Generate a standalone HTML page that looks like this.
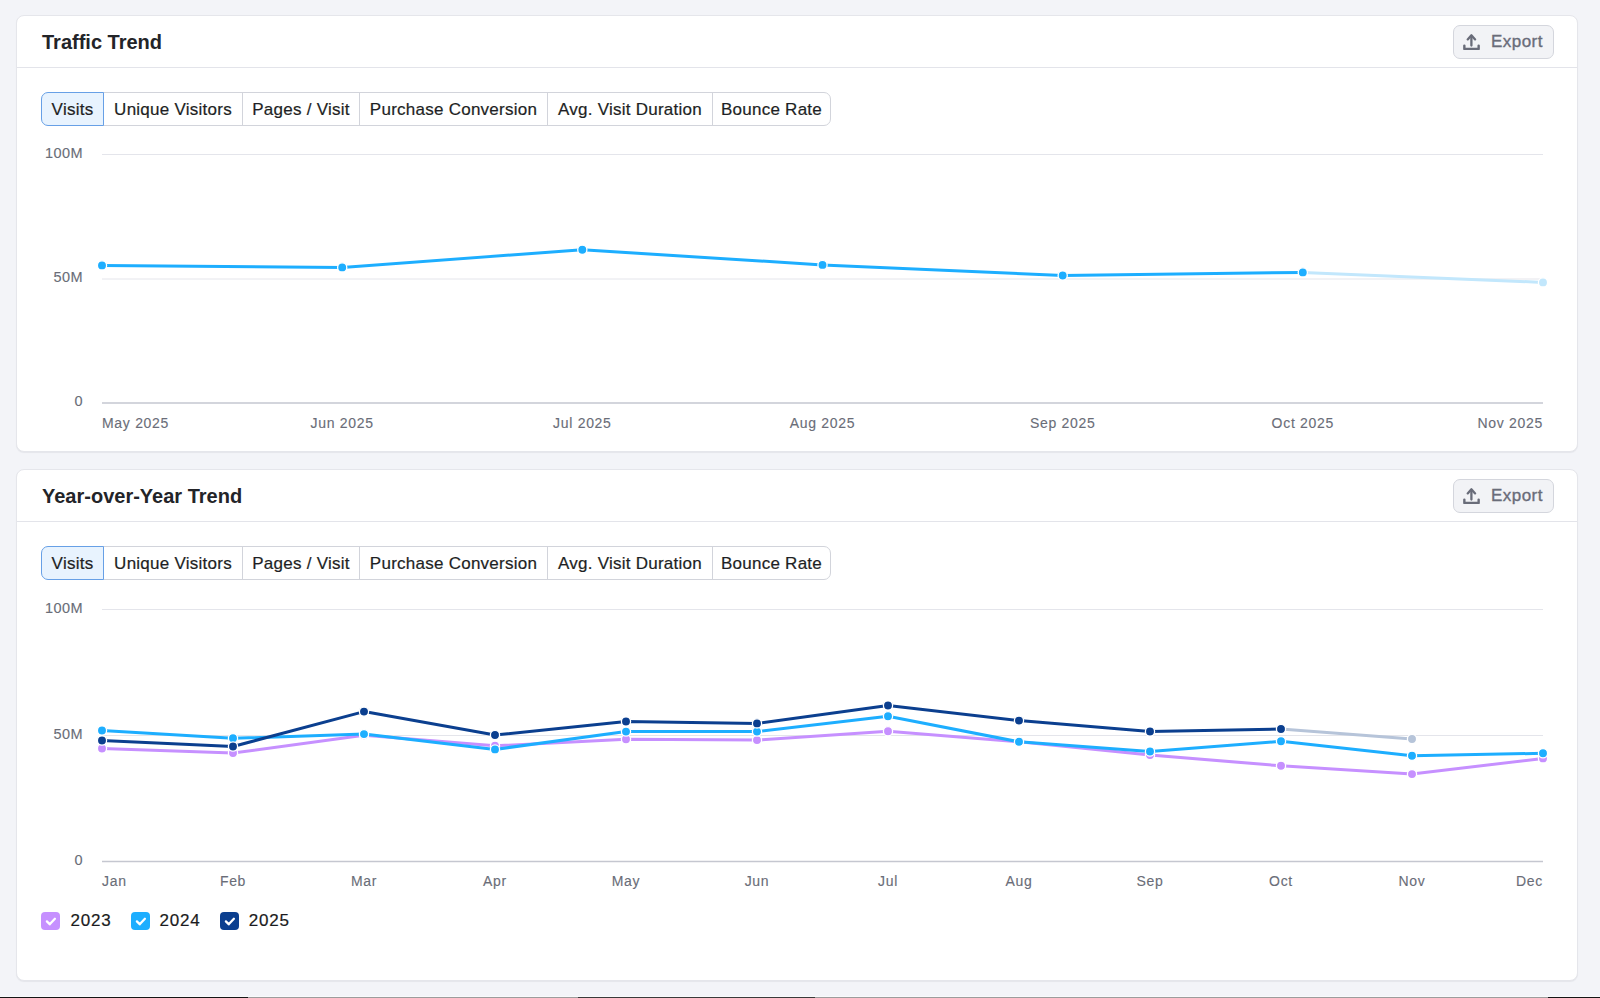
<!DOCTYPE html>
<html><head><meta charset="utf-8"><style>
html,body{margin:0;padding:0;}
body{width:1600px;height:998px;overflow:hidden;background:#F3F4F8;position:relative;font-family:"Liberation Sans",sans-serif;}
.card{position:absolute;left:16px;width:1562px;box-sizing:border-box;background:#fff;border:1px solid #E5E6EB;border-radius:8px;box-shadow:0 1px 1px rgba(20,20,40,0.06);}
.title{position:absolute;left:42px;font-size:20px;font-weight:bold;color:#232428;line-height:30px;letter-spacing:0px;}
.hdiv{position:absolute;left:17px;width:1560px;height:1px;background:#E3E4EA;}
.exp{position:absolute;left:1453px;width:101px;height:34px;box-sizing:border-box;border:1px solid #D4D6DD;border-radius:7px;background:#F2F3F6;color:#696C79;font-size:17px;}
.exp span{position:absolute;left:37px;top:6px;line-height:19px;letter-spacing:0.45px;-webkit-text-stroke:0.35px #696C79;}
.tabs{position:absolute;left:41px;width:790px;height:34px;}
.tab{position:absolute;top:0;height:34px;box-sizing:border-box;border:1px solid #D2D4DB;text-align:center;line-height:33px;font-size:17px;color:#1E1F24;letter-spacing:0.25px;-webkit-text-stroke:0.2px #1E1F24;}
.tab.act{background:#E8F3FE;border-color:#67A0E6;z-index:2;}
.yl{position:absolute;left:0;width:83px;text-align:right;font-size:14.5px;color:#6A6D78;line-height:14px;letter-spacing:0.45px;-webkit-text-stroke:0.12px #6A6D78;}
.xl{position:absolute;font-size:14px;color:#6A6D78;line-height:16px;letter-spacing:0.7px;-webkit-text-stroke:0.12px #6A6D78;}
.leg{position:absolute;top:912px;height:18px;}
.cb{position:absolute;left:0;top:0;width:18.6px;height:18px;border-radius:4px;}
.lt{position:absolute;left:29.5px;top:0;font-size:17px;line-height:18px;color:#1A1B20;letter-spacing:0.8px;-webkit-text-stroke:0.2px #1A1B20;}
svg.ov{position:absolute;left:0;top:0;}
</style></head><body>
<div class="card" style="top:15px;height:437px"></div>
<div class="title" style="top:27px">Traffic Trend</div>
<div class="hdiv" style="top:67px"></div>
<div class="exp" style="top:25px"><svg width="40" height="32" viewBox="0 0 40 32" style="position:absolute;left:0;top:0"><path d="M17.4 10.5 V19.6" stroke="#696C79" stroke-width="2.3" fill="none" stroke-linecap="round"/><path d="M13.7 13.4 L17.4 9.3 L21.1 13.4" stroke="#696C79" stroke-width="2.3" fill="none" stroke-linecap="round" stroke-linejoin="round"/><path d="M10.35 19.6 V22.9 H24.65 V19.6" stroke="#696C79" stroke-width="2.4" fill="none" stroke-linecap="round" stroke-linejoin="round"/></svg><span>Export</span></div>
<div class="tabs" style="top:92px"><div class="tab act" style="left:0px;width:63px;border-radius:7px 0 0 7px;">Visits</div><div class="tab" style="left:62px;width:140px;">Unique Visitors</div><div class="tab" style="left:201px;width:118px;">Pages / Visit</div><div class="tab" style="left:318px;width:189px;">Purchase Conversion</div><div class="tab" style="left:506px;width:166px;">Avg. Visit Duration</div><div class="tab" style="left:671px;width:119px;border-radius:0 7px 7px 0;">Bounce Rate</div></div>
<div class="yl" style="top:145.5px">100M</div><div class="yl" style="top:269.5px">50M</div><div class="yl" style="top:393.5px">0</div>
<div class="xl" style="left:102.0px;top:415px">May 2025</div><div class="xl" style="left:242.16666666666663px;width:200px;text-align:center;top:415px">Jun 2025</div><div class="xl" style="left:482.33333333333326px;width:200px;text-align:center;top:415px">Jul 2025</div><div class="xl" style="left:722.5px;width:200px;text-align:center;top:415px">Aug 2025</div><div class="xl" style="left:962.6666666666665px;width:200px;text-align:center;top:415px">Sep 2025</div><div class="xl" style="left:1202.8333333333333px;width:200px;text-align:center;top:415px">Oct 2025</div><div class="xl" style="left:1343.0px;width:200px;text-align:right;top:415px">Nov 2025</div>
<div class="card" style="top:469px;height:512px"></div>
<div class="title" style="top:481px">Year-over-Year Trend</div>
<div class="hdiv" style="top:521px"></div>
<div class="exp" style="top:479px"><svg width="40" height="32" viewBox="0 0 40 32" style="position:absolute;left:0;top:0"><path d="M17.4 10.5 V19.6" stroke="#696C79" stroke-width="2.3" fill="none" stroke-linecap="round"/><path d="M13.7 13.4 L17.4 9.3 L21.1 13.4" stroke="#696C79" stroke-width="2.3" fill="none" stroke-linecap="round" stroke-linejoin="round"/><path d="M10.35 19.6 V22.9 H24.65 V19.6" stroke="#696C79" stroke-width="2.4" fill="none" stroke-linecap="round" stroke-linejoin="round"/></svg><span>Export</span></div>
<div class="tabs" style="top:546px"><div class="tab act" style="left:0px;width:63px;border-radius:7px 0 0 7px;">Visits</div><div class="tab" style="left:62px;width:140px;">Unique Visitors</div><div class="tab" style="left:201px;width:118px;">Pages / Visit</div><div class="tab" style="left:318px;width:189px;">Purchase Conversion</div><div class="tab" style="left:506px;width:166px;">Avg. Visit Duration</div><div class="tab" style="left:671px;width:119px;border-radius:0 7px 7px 0;">Bounce Rate</div></div>
<div class="yl" style="top:601px">100M</div><div class="yl" style="top:726.6px">50M</div><div class="yl" style="top:853px">0</div>
<div class="xl" style="left:102px;top:873px">Jan</div><div class="xl" style="left:133px;width:200px;text-align:center;top:873px">Feb</div><div class="xl" style="left:264px;width:200px;text-align:center;top:873px">Mar</div><div class="xl" style="left:395px;width:200px;text-align:center;top:873px">Apr</div><div class="xl" style="left:526px;width:200px;text-align:center;top:873px">May</div><div class="xl" style="left:657px;width:200px;text-align:center;top:873px">Jun</div><div class="xl" style="left:788px;width:200px;text-align:center;top:873px">Jul</div><div class="xl" style="left:919px;width:200px;text-align:center;top:873px">Aug</div><div class="xl" style="left:1050px;width:200px;text-align:center;top:873px">Sep</div><div class="xl" style="left:1181px;width:200px;text-align:center;top:873px">Oct</div><div class="xl" style="left:1312px;width:200px;text-align:center;top:873px">Nov</div><div class="xl" style="left:1343px;width:200px;text-align:right;top:873px">Dec</div>
<div class="leg" style="left:41px"><div class="cb" style="background:#C690FF"><svg width="19" height="18" viewBox="0 0 19 18" style="position:absolute;left:0;top:0"><path d="M5.9 9.4 L8.7 12.3 L13.9 6.8" stroke="#fff" stroke-width="2.3" fill="none" stroke-linecap="round" stroke-linejoin="round"/></svg></div><div class="lt" style="left:29.5px">2023</div></div>
<div class="leg" style="left:131px"><div class="cb" style="background:#1DAEFF"><svg width="19" height="18" viewBox="0 0 19 18" style="position:absolute;left:0;top:0"><path d="M5.9 9.4 L8.7 12.3 L13.9 6.8" stroke="#fff" stroke-width="2.3" fill="none" stroke-linecap="round" stroke-linejoin="round"/></svg></div><div class="lt" style="left:28.5px">2024</div></div>
<div class="leg" style="left:220px"><div class="cb" style="background:#0B3F8F"><svg width="19" height="18" viewBox="0 0 19 18" style="position:absolute;left:0;top:0"><path d="M5.9 9.4 L8.7 12.3 L13.9 6.8" stroke="#fff" stroke-width="2.3" fill="none" stroke-linecap="round" stroke-linejoin="round"/></svg></div><div class="lt" style="left:28.75px">2025</div></div>
<svg class="ov" width="1600" height="998" viewBox="0 0 1600 998">
<line x1="102" y1="154.5" x2="1543" y2="154.5" stroke="#E4E5EB" stroke-width="1"/>
<line x1="102" y1="279" x2="1543" y2="279" stroke="#E4E5EB" stroke-width="1"/>
<line x1="102" y1="403" x2="1543" y2="403" stroke="#C5C7D0" stroke-width="1.3"/>
<polyline points="102.0,265.4 342.2,267.4 582.3,249.8 822.5,264.9 1062.7,275.5 1302.8,272.4" fill="none" stroke="#1DAEFF" stroke-width="3" stroke-linejoin="round"/>
<polyline points="1302.8,272.4 1543.0,282.4" fill="none" stroke="#C2E7FC" stroke-width="3"/>
<circle cx="102.0" cy="265.4" r="4.6" fill="#1DAEFF" stroke="#fff" stroke-width="1.3"/><circle cx="342.2" cy="267.4" r="4.6" fill="#1DAEFF" stroke="#fff" stroke-width="1.3"/><circle cx="582.3" cy="249.8" r="4.6" fill="#1DAEFF" stroke="#fff" stroke-width="1.3"/><circle cx="822.5" cy="264.9" r="4.6" fill="#1DAEFF" stroke="#fff" stroke-width="1.3"/><circle cx="1062.7" cy="275.5" r="4.6" fill="#1DAEFF" stroke="#fff" stroke-width="1.3"/><circle cx="1302.8" cy="272.4" r="4.6" fill="#1DAEFF" stroke="#fff" stroke-width="1.3"/>
<circle cx="1543.0" cy="282.4" r="4.6" fill="#C2E7FC" stroke="#fff" stroke-width="1.3"/>
<line x1="102" y1="609.5" x2="1543" y2="609.5" stroke="#E4E5EB" stroke-width="1"/>
<line x1="102" y1="735.5" x2="1543" y2="735.5" stroke="#E4E5EB" stroke-width="1"/>
<line x1="102" y1="861.5" x2="1543" y2="861.5" stroke="#C5C7D0" stroke-width="1.3"/>
<polyline points="102.0,748.5 233.0,753.0 364.0,735.3 495.0,745.8 626.0,739.3 757.0,740.1 888.0,731.2 1019.0,741.8 1150.0,755.1 1281.0,765.8 1412.0,774.1 1543.0,758.4" fill="none" stroke="#C690FF" stroke-width="3" stroke-linejoin="round"/>
<circle cx="102.0" cy="748.5" r="4.6" fill="#C690FF" stroke="#fff" stroke-width="1.3"/><circle cx="233.0" cy="753.0" r="4.6" fill="#C690FF" stroke="#fff" stroke-width="1.3"/><circle cx="364.0" cy="735.3" r="4.6" fill="#C690FF" stroke="#fff" stroke-width="1.3"/><circle cx="495.0" cy="745.8" r="4.6" fill="#C690FF" stroke="#fff" stroke-width="1.3"/><circle cx="626.0" cy="739.3" r="4.6" fill="#C690FF" stroke="#fff" stroke-width="1.3"/><circle cx="757.0" cy="740.1" r="4.6" fill="#C690FF" stroke="#fff" stroke-width="1.3"/><circle cx="888.0" cy="731.2" r="4.6" fill="#C690FF" stroke="#fff" stroke-width="1.3"/><circle cx="1019.0" cy="741.8" r="4.6" fill="#C690FF" stroke="#fff" stroke-width="1.3"/><circle cx="1150.0" cy="755.1" r="4.6" fill="#C690FF" stroke="#fff" stroke-width="1.3"/><circle cx="1281.0" cy="765.8" r="4.6" fill="#C690FF" stroke="#fff" stroke-width="1.3"/><circle cx="1412.0" cy="774.1" r="4.6" fill="#C690FF" stroke="#fff" stroke-width="1.3"/><circle cx="1543.0" cy="758.4" r="4.6" fill="#C690FF" stroke="#fff" stroke-width="1.3"/>
<polyline points="102.0,730.5 233.0,738.3 364.0,734.1 495.0,749.4 626.0,731.6 757.0,731.6 888.0,716.2 1019.0,741.8 1150.0,751.5 1281.0,741.3 1412.0,755.8 1543.0,753.3" fill="none" stroke="#1DAEFF" stroke-width="3" stroke-linejoin="round"/>
<circle cx="102.0" cy="730.5" r="4.6" fill="#1DAEFF" stroke="#fff" stroke-width="1.3"/><circle cx="233.0" cy="738.3" r="4.6" fill="#1DAEFF" stroke="#fff" stroke-width="1.3"/><circle cx="364.0" cy="734.1" r="4.6" fill="#1DAEFF" stroke="#fff" stroke-width="1.3"/><circle cx="495.0" cy="749.4" r="4.6" fill="#1DAEFF" stroke="#fff" stroke-width="1.3"/><circle cx="626.0" cy="731.6" r="4.6" fill="#1DAEFF" stroke="#fff" stroke-width="1.3"/><circle cx="757.0" cy="731.6" r="4.6" fill="#1DAEFF" stroke="#fff" stroke-width="1.3"/><circle cx="888.0" cy="716.2" r="4.6" fill="#1DAEFF" stroke="#fff" stroke-width="1.3"/><circle cx="1019.0" cy="741.8" r="4.6" fill="#1DAEFF" stroke="#fff" stroke-width="1.3"/><circle cx="1150.0" cy="751.5" r="4.6" fill="#1DAEFF" stroke="#fff" stroke-width="1.3"/><circle cx="1281.0" cy="741.3" r="4.6" fill="#1DAEFF" stroke="#fff" stroke-width="1.3"/><circle cx="1412.0" cy="755.8" r="4.6" fill="#1DAEFF" stroke="#fff" stroke-width="1.3"/><circle cx="1543.0" cy="753.3" r="4.6" fill="#1DAEFF" stroke="#fff" stroke-width="1.3"/>
<polyline points="102.0,740.5 233.0,746.5 364.0,711.6 495.0,735.0 626.0,721.5 757.0,723.4 888.0,705.5 1019.0,720.6 1150.0,731.5 1281.0,729.0" fill="none" stroke="#0B3F8F" stroke-width="3" stroke-linejoin="round"/>
<polyline points="1281.0,729.0 1412.0,739.0" fill="none" stroke="#B6C4D9" stroke-width="3"/>
<circle cx="102.0" cy="740.5" r="4.6" fill="#0B3F8F" stroke="#fff" stroke-width="1.3"/><circle cx="233.0" cy="746.5" r="4.6" fill="#0B3F8F" stroke="#fff" stroke-width="1.3"/><circle cx="364.0" cy="711.6" r="4.6" fill="#0B3F8F" stroke="#fff" stroke-width="1.3"/><circle cx="495.0" cy="735.0" r="4.6" fill="#0B3F8F" stroke="#fff" stroke-width="1.3"/><circle cx="626.0" cy="721.5" r="4.6" fill="#0B3F8F" stroke="#fff" stroke-width="1.3"/><circle cx="757.0" cy="723.4" r="4.6" fill="#0B3F8F" stroke="#fff" stroke-width="1.3"/><circle cx="888.0" cy="705.5" r="4.6" fill="#0B3F8F" stroke="#fff" stroke-width="1.3"/><circle cx="1019.0" cy="720.6" r="4.6" fill="#0B3F8F" stroke="#fff" stroke-width="1.3"/><circle cx="1150.0" cy="731.5" r="4.6" fill="#0B3F8F" stroke="#fff" stroke-width="1.3"/><circle cx="1281.0" cy="729.0" r="4.6" fill="#0B3F8F" stroke="#fff" stroke-width="1.3"/>
<circle cx="1412.0" cy="739.0" r="4.6" fill="#B6C4D9" stroke="#fff" stroke-width="1.3"/>
</svg>
<div style="position:absolute;left:0;top:996px;width:1600px;height:1px;background:#F9FAFB;"></div><div style="position:absolute;left:0;top:997px;width:1600px;height:1px;background:linear-gradient(90deg,#151515 0,#151515 248px,#9C9C9C 248px,#9C9C9C 578px,#3a3a3a 578px,#3a3a3a 815px,#9C9C9C 815px,#9C9C9C 1548px,#151515 1548px);"></div>
</body></html>
